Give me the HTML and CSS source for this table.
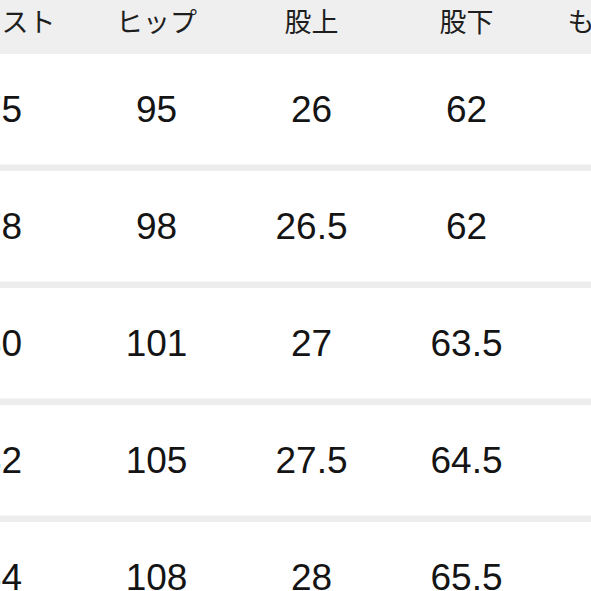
FILE: index.html
```html
<!DOCTYPE html>
<html lang="ja">
<head>
<meta charset="utf-8">
<link rel="stylesheet" href="styles.css">
</head>
<body>
<div class="viewport">
  <div class="table">
    <div class="row head">
      <div class="cell">ウエスト</div>
      <div class="cell">ヒップ</div>
      <div class="cell">股上</div>
      <div class="cell">股下</div>
      <div class="cell">もも周り</div>
    </div>
    <div class="row">
      <div class="cell">75</div><div class="cell">95</div><div class="cell">26</div><div class="cell">62</div><div class="cell">30</div>
    </div>
    <div class="row">
      <div class="cell">78</div><div class="cell">98</div><div class="cell">26.5</div><div class="cell">62</div><div class="cell">31</div>
    </div>
    <div class="row">
      <div class="cell">80</div><div class="cell">101</div><div class="cell">27</div><div class="cell">63.5</div><div class="cell">32</div>
    </div>
    <div class="row">
      <div class="cell">82</div><div class="cell">105</div><div class="cell">27.5</div><div class="cell">64.5</div><div class="cell">33</div>
    </div>
    <div class="row">
      <div class="cell">84</div><div class="cell">108</div><div class="cell">28</div><div class="cell">65.5</div><div class="cell">34</div>
    </div>
  </div>
</div>
</body>
</html>
```
FILE: styles.css
```css
html, body {
  margin: 0;
  padding: 0;
  background: #ffffff;
}
.viewport {
  width: 591px;
  height: 591px;
  overflow: hidden;
}
.table {
  width: 775px;
  margin-left: -76px;
  display: flex;
  flex-direction: column;
}
.row {
  display: grid;
  grid-template-columns: repeat(5, 155px);
  height: 111px;
  border-bottom: 6px solid #ededed;
  box-shadow: inset 0 -1px 0 #f6f6f6;
  font-family: "Liberation Sans", Arial, sans-serif;
  font-size: 37px;
  color: #141414;
}
.row .cell {
  display: flex;
  align-items: center;
  justify-content: center;
  white-space: nowrap;
}
.row.head {
  height: 54px;
  border-bottom: none;
  box-shadow: none;
  background: #efefef;
  font-family: "Noto Sans CJK JP", "Noto Sans", sans-serif;
  font-size: 27px;
  color: #1e1e1e;
}
.row.head .cell {
  align-items: flex-start;
  padding-top: 7px;
  line-height: 28px;
}
```
